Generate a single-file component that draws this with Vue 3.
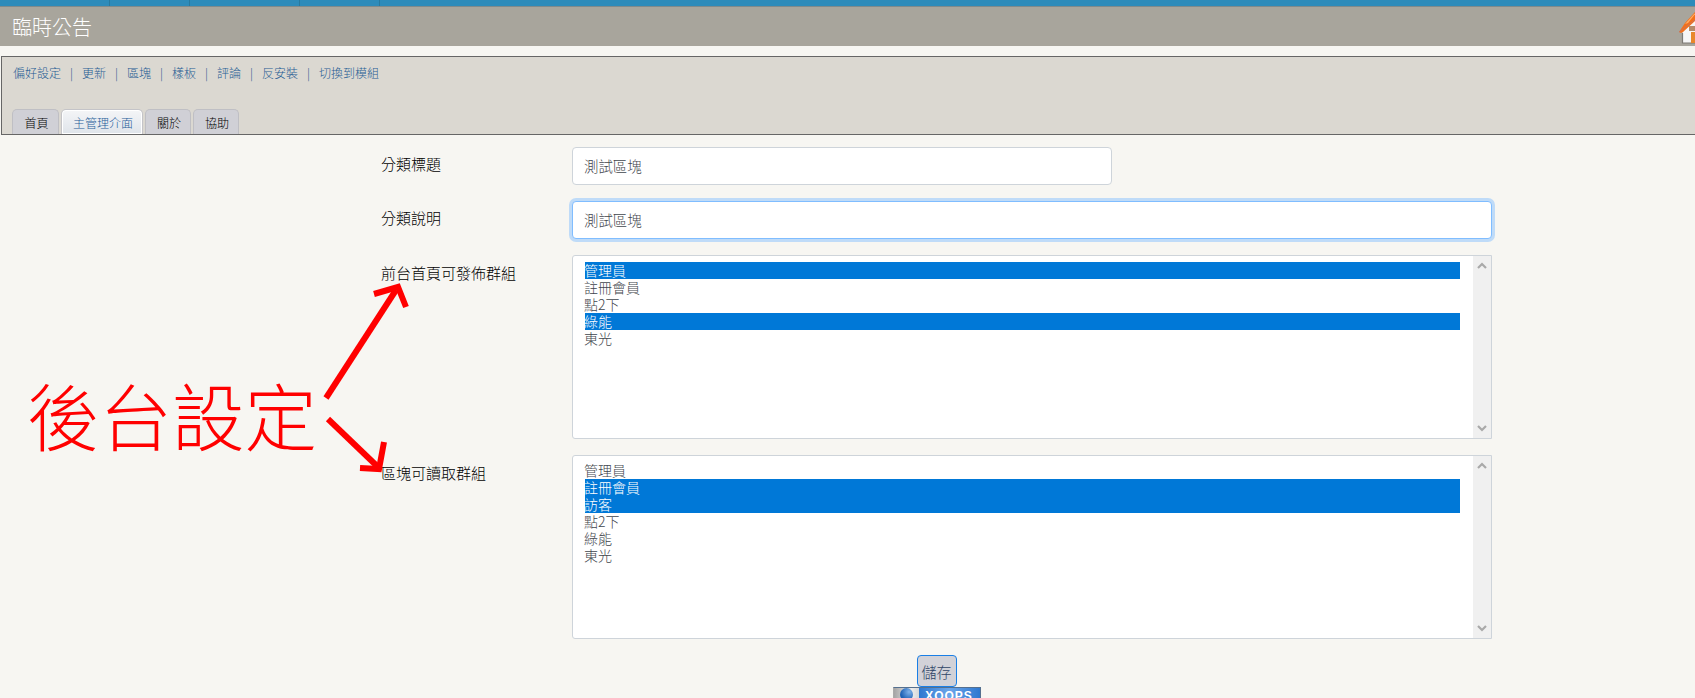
<script setup>
const links = ['偏好設定', '更新', '區塊', '樣板', '評論', '反安裝', '切換到模組']
const tabs = [
  { t: '首頁', w: 47 },
  { t: '主管理介面', w: 82, active: true },
  { t: '關於', w: 46 },
  { t: '協助', w: 46 },
]
const topSegs = [109, 79, 109, 79]
const g1 = [
  { t: '管理員', s: true }, { t: '註冊會員' }, { t: '點2下' }, { t: '綠能', s: true }, { t: '東光' },
]
const g2 = [
  { t: '管理員' }, { t: '註冊會員', s: true }, { t: '訪客', s: true }, { t: '點2下' }, { t: '綠能' }, { t: '東光' },
]
const lists = [
  { label: '前台首頁可發佈群組', items: g1 },
  { label: '區塊可讀取群組', items: g2 },
]
</script>

<template>
  <div class="page">
    <div class="topbar">
      <span v-for="(w, i) in topSegs" :key="i" class="seg" :style="{ width: w + 'px' }"></span>
    </div>
    <header class="head">
      <h1>臨時公告</h1>
      <svg class="home" width="32" height="32" viewBox="0 0 32 32">
        <path d="M3.5 19 L14 8 L32 6 L32 31 L3.5 31 Z" fill="#f6f6f6"/>
        <path d="M3.5 21 L3.5 31 L32 31" fill="none" stroke="#7d7a74" stroke-width="1.2"/>
        <path d="M0 20 L6 11 L16 0 L32 0 L32 8 L16 9 L4 20 L2 21 Z" fill="#f3701a"/>
        <path d="M6 12 L15 2 L17 1 L9 11 Z" fill="#ffab63"/>
        <path d="M0 20 L15 8.5 L32 8" fill="none" stroke="#c9745a" stroke-width="1"/>
        <rect x="10" y="14" width="22" height="5" fill="#b48a6a"/>
        <rect x="12" y="20" width="20" height="11" fill="#e8872c"/>
      </svg>
    </header>

    <section class="panel">
      <nav class="links">
        <template v-for="(l, i) in links" :key="l">
          <a>{{ l }}</a><span v-if="i < links.length - 1" class="sep">|</span>
        </template>
      </nav>
      <div class="tabs">
        <div v-for="t in tabs" :key="t.t" class="tab" :class="{ active: t.active }" :style="{ width: t.w + 'px' }">{{ t.t }}</div>
      </div>
    </section>

    <form class="form" @submit.prevent>
      <div class="row r1">
        <label>分類標題</label>
        <div class="input short">測試區塊</div>
      </div>
      <div class="row r2">
        <label>分類說明</label>
        <div class="input focus">測試區塊</div>
      </div>
      <div v-for="g in lists" :key="g.label" class="row r3">
        <label>{{ g.label }}</label>
        <div class="listbox">
          <div class="opts">
            <div v-for="o in g.items" :key="o.t" class="opt" :class="{ sel: o.s }">{{ o.t }}</div>
          </div>
          <div class="sb">
            <svg width="10" height="7" viewBox="0 0 10 7"><path d="M1 6 L5 2 L9 6" fill="none" stroke="#a9a9a9" stroke-width="2.2"/></svg>
            <svg width="10" height="7" viewBox="0 0 10 7"><path d="M1 1 L5 5 L9 1" fill="none" stroke="#a9a9a9" stroke-width="2.2"/></svg>
          </div>
        </div>
      </div>
      <div class="actions">
        <button type="button" class="save">儲存</button>
        <div class="xoops">
          <span class="xl"><i class="ball"></i></span>
          <span class="xr">XOOPS</span>
        </div>
      </div>
    </form>

    <div class="note">後台設定</div>
    <svg class="arrows" width="420" height="200" viewBox="0 0 420 200">
      <g fill="none" stroke="#ff0000" stroke-width="6">
        <path d="M326 148 L396 40"/>
        <path d="M374 44 L398 37 L406 57"/>
      </g>
    </svg>
    <svg class="arrow2" width="70" height="70" viewBox="0 0 70 70">
      <g fill="none" stroke="#ff0000" stroke-width="6">
        <path d="M6 5 L56 53"/>
        <path d="M62 28 L57 55 L38 54"/>
      </g>
    </svg>
  </div>
</template>

<style>
html, body { margin: 0; background: #f7f6f2; overflow: hidden; }
</style>

<style scoped>
.page {
  position: relative;
  width: 1695px;
  height: 698px;
  overflow: hidden;
  background: #f7f6f2;
  font-family: "Noto Sans CJK TC", "Liberation Sans", sans-serif;
  font-weight: 400;
  color: #000;
}
.topbar {
  height: 6px;
  background: #2d8bba;
  display: flex;
  border-bottom: 1px solid #7f8a8c;
}
.seg { border-right: 1px solid #27799f; }
.head {
  height: 39px;
  background: #a8a59c;
  display: flex;
  align-items: center;
  justify-content: space-between;
  padding-left: 12px;
  margin-bottom: 10px;
  overflow: hidden;
}
.head h1 {
  margin: 0;
  font-size: 20px;
  line-height: 39px;
  font-weight: 300;
  color: #fff;
}
.home { margin: 3px -16px 0 0; flex: none; }
.panel {
  height: 77px;
  margin-left: 1px;
  background: #dbd8d1;
  border: 1px solid #666;
  border-right: none;
  display: flex;
  flex-direction: column;
  justify-content: space-between;
}
.links {
  padding: 7px 0 0 11px;
  font-size: 12px;
  line-height: 17px;
  font-weight: 300;
  color: #1f5c94;
  display: flex;
}
.sep { width: 21px; text-align: center; color: #2a5d8f; }
.tabs { display: flex; gap: 2px; padding-left: 10px; }
.tab {
  box-sizing: border-box;
  height: 25px;
  padding-left: 2px;
  background: #d0d0d6;
  border: 1px solid #bfbfc4;
  border-bottom: none;
  border-radius: 5px 5px 0 0;
  font-size: 12px;
  font-weight: 300;
  line-height: 26px;
  text-align: center;
  color: #000;
}
.tab.active {
  background: linear-gradient(#f4f5f7, #dfe4ea);
  border: 1px solid #c4c4c8;
  border-bottom: none;
  color: #1f5d99;
  box-shadow: inset 0 0 0 1px #fff;
}
.form { padding: 12px 0 0 381px; width: 1111px; }
.row { display: flex; align-items: flex-start; }
.row label {
  width: 191px;
  flex: none;
  font-size: 15px;
  font-weight: 300;
  line-height: 20px;
  padding-top: 7px;
}
.r1 { height: 54px; }
.r2 { height: 54px; }
.r3 { height: 200px; }
.r3 label { padding-top: 8px; }
.input {
  box-sizing: border-box;
  height: 38px;
  width: 920px;
  background: #fff;
  border: 1px solid #ced4da;
  border-radius: 4px;
  padding-left: 11px;
  font-size: 14.4px;
  font-weight: 300;
  line-height: 36px;
  color: #3f464d;
}
.input.short { width: 540px; }
.input.focus {
  border-color: #80bdff;
  box-shadow: 0 0 0 3px #bfdbf8;
}
.listbox {
  box-sizing: border-box;
  width: 920px;
  height: 184px;
  background: #fff;
  border: 1px solid #ced4da;
  border-radius: 3px 0 0 3px;
  display: flex;
  justify-content: space-between;
}
.opts { width: 875px; padding: 6px 0 0 12px; }
.opt {
  height: 17px;
  font-size: 14px;
  font-weight: 300;
  line-height: 16px;
  text-indent: -1px;
  color: #3f464d;
}
.opt.sel { background: #0078d7; color: #fff; }
.sb {
  width: 18px;
  background: #f0f0f0;
  display: flex;
  flex-direction: column;
  justify-content: space-between;
  align-items: center;
  padding: 6px 0;
  box-sizing: border-box;
}
.actions {
  display: flex;
  flex-direction: column;
  align-items: center;
  margin-top: 0;
}
.save {
  box-sizing: border-box;
  width: 40px;
  height: 32px;
  padding: 0;
  background: #d2d2d8;
  border: 1px solid #1a7fe6;
  border-radius: 4px;
  font-family: inherit;
  font-weight: 300;
  font-size: 15px;
  color: #2f4566;
}
.xoops {
  width: 88px;
  height: 31px;
  display: flex;
  border: 1px solid #55708f;
  box-sizing: border-box;
  border-left-color: #aaa;
}
.xl {
  width: 25px;
  background: linear-gradient(90deg, #a5a5a5, #ececec 70%, #d8d8d8);
  position: relative;
}
.ball {
  position: absolute;
  left: 6px;
  top: 0;
  width: 13px;
  height: 13px;
  border-radius: 50%;
  background: radial-gradient(circle at 70% 30%, #7fb2ea, #1f62b5 65%);
}
.xr {
  flex: 1;
  background: linear-gradient(90deg, #2f78d0, #6ba6ea 50%, #2f78d0);
  color: #fff;
  font-family: "Liberation Sans", sans-serif;
  font-weight: 700;
  font-size: 12px;
  letter-spacing: 1px;
  line-height: 15px;
  padding-top: 1px;
  text-align: center;
}
.note {
  position: absolute;
  left: 27px;
  top: 372px;
  font-size: 72.5px;
  line-height: 84px;
  color: #ff0000;
  font-weight: 300;
  white-space: nowrap;
}
.arrows { position: absolute; left: 0; top: 250px; }
.arrow2 { position: absolute; left: 322px; top: 414px; }
</style>
